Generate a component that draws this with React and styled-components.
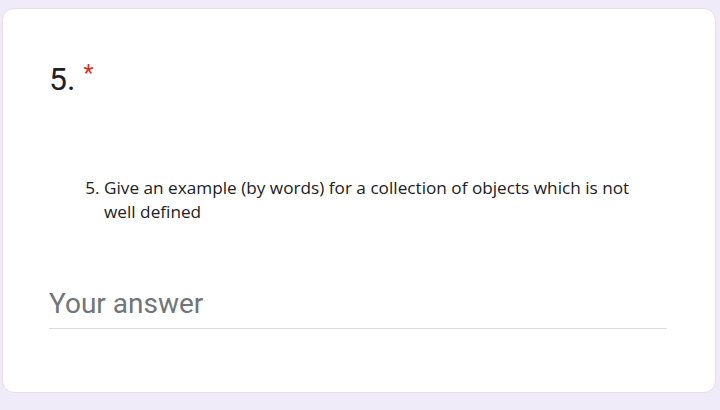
import React from 'react'
import styled, { createGlobalStyle } from 'styled-components';

const GlobalStyle = createGlobalStyle`
  html, body {
    margin: 0;
    padding: 0;
    background: #efebf8;
  }
`;

const Page = styled.div`
  width: 720px;
  height: 410px;
  box-sizing: border-box;
  padding: 8px 4px 17px 2px;
  background: #efebf8;
`;

const Card = styled.div`
  height: 100%;
  box-sizing: border-box;
  background: #fff;
  border: 1px solid #e3e0ea;
  border-radius: 12px;
  padding: 50px 48px 0 46px;
  display: flex;
  flex-direction: column;
`;

const Title = styled.div`
  display: flex;
  align-items: flex-start;
  gap: 8px;
  font-family: Roboto, "Liberation Sans", sans-serif;
  font-size: 32px;
  line-height: 40px;
  color: #202124;
`;

const Star = styled.span`
  color: #d93025;
  font-size: 23px;
  line-height: 30px;
`;

const QuestionList = styled.ol`
  margin: 77px 28px 0 0;
  padding: 0 0 0 55px;
  font-family: "Open Sans", "Liberation Sans", sans-serif;
  font-size: 17.2px;
  line-height: 24px;
  color: #202124;
  list-style-position: outside;
`;

const AnswerField = styled.div`
  margin: 62px 0 0 0;
  padding-bottom: 6px;
  border-bottom: 1px solid #dadce0;
  font-family: Roboto, "Liberation Sans", sans-serif;
  font-size: 28px;
  line-height: 36px;
  color: #70757a;
`;

const App = () => {
  return (
    <Page>
      <GlobalStyle />
      <Card>
        <Title>5.<Star>*</Star></Title>
        <QuestionList start={5}>
          <li>Give an example (by words) for a collection of objects which is not well defined</li>
        </QuestionList>
        <AnswerField>Your answer</AnswerField>
      </Card>
    </Page>
  )
}

export default App
